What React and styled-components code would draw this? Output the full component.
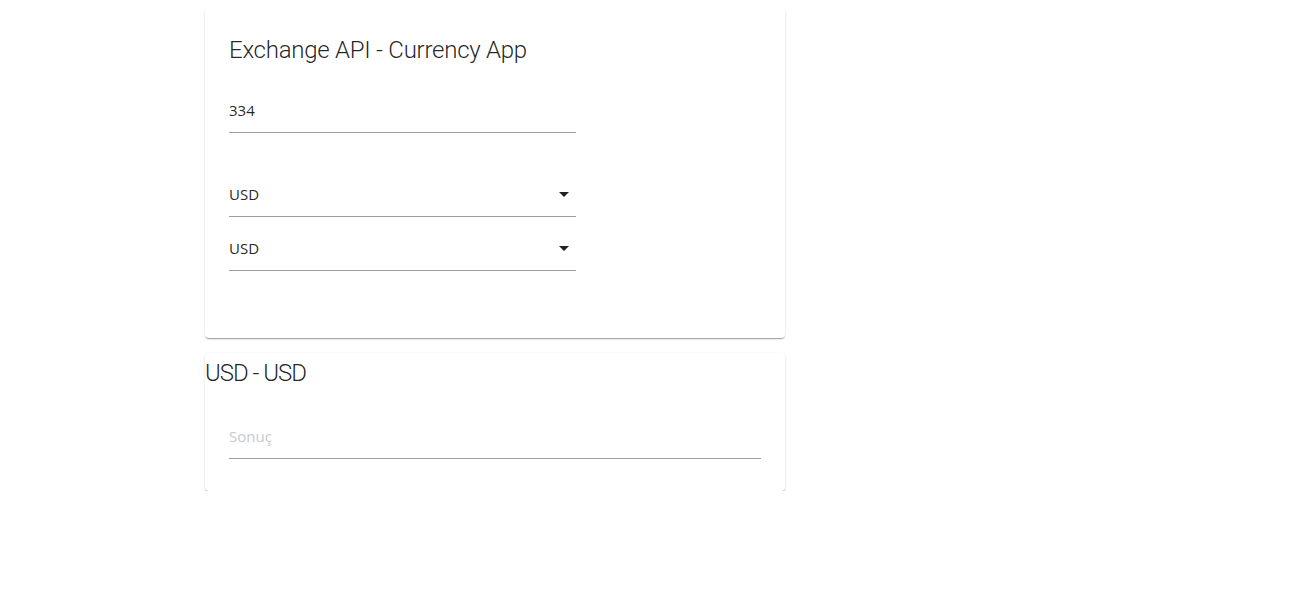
import React from "react";
import styled, { createGlobalStyle } from "styled-components";

const GlobalStyle = createGlobalStyle`
    body {
        margin: 8px;
        background: #fff;
        font-family: "Open Sans", "Noto Sans", sans-serif;
    }
`;

const Page = styled.div`
    display: flex;
    flex-direction: column;
    gap: 15px;
    width: 580px;
    margin-left: 197px;
`;

const Card = styled.div`
    background: #fff;
    border-radius: 4px;
    box-shadow: 0 2px 1px -1px rgba(0, 0, 0, 0.2), 0 1px 1px 0 rgba(0, 0, 0, 0.14), 0 1px 3px 0 rgba(0, 0, 0, 0.12);
    padding: ${(p) => p.$padding};
    display: flex;
    flex-direction: column;
`;

const Title = styled.h2`
    margin: 0;
    padding-top: ${(p) => p.$top || "0"};
    font-family: Roboto, "Open Sans", sans-serif;
    font-weight: 300;
    font-size: 24px;
    letter-spacing: ${(p) => p.$spacing || "0"};
    line-height: 32px;
    color: rgba(0, 0, 0, 0.87);
`;

const Field = styled.div`
    display: flex;
    align-items: center;
    justify-content: space-between;
    width: ${(p) => p.$width || "347px"};
    margin-top: ${(p) => p.$top};
    margin-left: ${(p) => p.$indent || "0"};
    padding-bottom: 12px;
    border-bottom: 1px solid rgba(0, 0, 0, 0.38);
    font-size: 15px;
    line-height: 20px;
    color: ${(p) => (p.$placeholder ? "#c9c9c9" : "rgba(0, 0, 0, 0.87)")};
`;

const Arrow = styled.span`
    width: 0;
    height: 0;
    margin-right: 7px;
    border-left: 5px solid transparent;
    border-right: 5px solid transparent;
    border-top: 5px solid rgba(0, 0, 0, 0.87);
`;

const Select = ({ value, top }) => (
    <Field $top={top}>
        <span>{value}</span>
        <Arrow />
    </Field>
);

export default function App() {
    return (
        <>
            <GlobalStyle />
            <Page>
                <Card $padding="24px 24px 67px">
                    <Title $top="2px" $spacing="-0.25px">Exchange API - Currency App</Title>
                    <Field $top="34px">334</Field>
                    <Select value="USD" top="51px" />
                    <Select value="USD" top="21px" />
                </Card>
                <Card $padding="0 24px 32px 0">
                    <Title $top="4px" $spacing="-1px">USD - USD</Title>
                    <Field $top="37px" $width="532px" $indent="24px" $placeholder>
                        Sonuç
                    </Field>
                </Card>
            </Page>
        </>
    );
}
